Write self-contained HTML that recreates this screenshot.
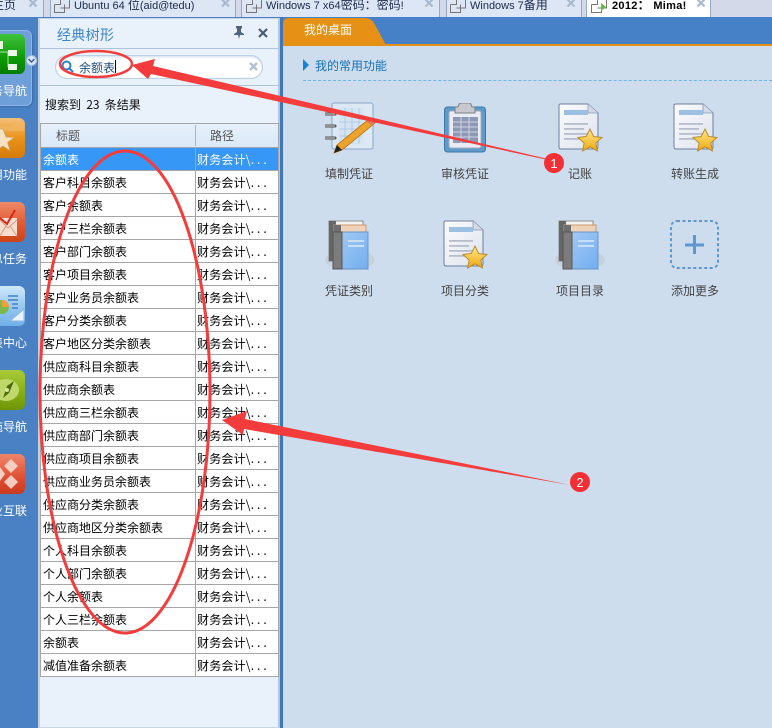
<!DOCTYPE html>
<html lang="zh"><head><meta charset="utf-8">
<style>
html,body{margin:0;padding:0;width:772px;height:728px;overflow:hidden;background:#4a80c4}
body{position:relative;font:12px/16px "WenQuanYi Zen Hei","Noto Sans CJK SC","Liberation Sans",sans-serif;color:#000}
div,span,svg{position:absolute;box-sizing:border-box}
.tab{top:-2px;height:19px;background:#dce6f4;border-left:1px solid #9aa9c2;border-right:1px solid #9aa9c2;white-space:nowrap;overflow:hidden;color:#1c2b4a;line-height:16px;font-family:"Liberation Sans","WenQuanYi Zen Hei",sans-serif}
.tab b{position:absolute;left:23px;top:-1px;font-weight:normal;font-size:11px}
.tab b em{font-style:normal;font-size:12px}
.side{left:0;width:25px;height:40px;border-radius:0 6px 6px 0;overflow:hidden}
.sl{left:-20px;width:47px;text-align:right;color:#fff;white-space:nowrap;height:16px}
.r{left:41px;width:237px;height:23px;border-bottom:1px solid #a6a6a6;background:#fff;white-space:nowrap;line-height:21px}
.r i{position:absolute;font-style:normal;left:2px;top:1px}
.r u{position:absolute;text-decoration:none;left:156px;top:1px;letter-spacing:.2px}
.r u em{font-style:normal;letter-spacing:3px}
.r:after{content:"";position:absolute;left:154px;top:0;width:1px;height:23px;background:#a6a6a6}
.lab{width:90px;text-align:center;color:#444;height:16px}
</style></head><body>

<svg width="0" height="0" style="left:0;top:0">
<defs>
<linearGradient id="st" x1="0" y1="0" x2="0" y2="1"><stop offset="0" stop-color="#ffe88a"/><stop offset="1" stop-color="#f0a810"/></linearGradient>
<linearGradient id="bk" x1="0" y1="0" x2="1" y2="1"><stop offset="0" stop-color="#a8cdf4"/><stop offset="1" stop-color="#72aef0"/></linearGradient>
<linearGradient id="pap" x1="0" y1="0" x2="1" y2="1"><stop offset="0" stop-color="#fbfcfe"/><stop offset="1" stop-color="#dde2ec"/></linearGradient>
<symbol id="doc" viewBox="0 0 46 50">
<path d="M1 2.500Q1 1 2.500 1H30L40 10V44Q40 46 38 46H3Q1 46 1 44Z" fill="url(#pap)" stroke="#6f7e9e" stroke-width="1"/>
<path d="M30 1V10H40" fill="#d3d9e5" stroke="#8c99b3" stroke-width=".8"/>
<rect x="6" y="7" width="24" height="5" fill="#9cc0e2"/>
<rect x="6" y="20" width="24" height="1.800" fill="#b7bdcc"/><rect x="6" y="25" width="20" height="1.800" fill="#b7bdcc"/>
<rect x="6" y="30" width="24" height="1.800" fill="#b7bdcc"/><rect x="6" y="35" width="22" height="1.800" fill="#b7bdcc"/>
<path d="M32 26l3.600 7.500 8.400 1-6.200 5.500 1.700 8-7.500-4.200-7.400 4.200 1.500-8-6.200-5.500 8.400-1z" fill="url(#st)" stroke="#b5862a" stroke-width=".9"/>
</symbol>
<symbol id="books" viewBox="0 0 50 50">
<ellipse cx="25" cy="40" rx="25" ry="10" fill="#c6d1dc"/>
<rect x="4" y="1" width="34" height="40" fill="#f4f4f4" stroke="#8a8a8a"/><rect x="4" y="1" width="7" height="40" fill="#666"/>
<rect x="9" y="5" width="32" height="41" fill="#efd3b8" stroke="#c89a70"/><rect x="9" y="5" width="7" height="41" fill="#6e6e6e"/>
<rect x="8" y="12" width="35" height="37" fill="url(#bk)" stroke="#6c94c4"/><rect x="8" y="12" width="9" height="37" fill="#7c7c7c" stroke="#555"/>
<rect x="23" y="20" width="16" height="2" fill="#c9dff5"/><rect x="23" y="25" width="16" height="2" fill="#c9dff5"/>
</symbol>
</defs></svg>

<!-- tab bar -->
<div style="left:0;top:0;width:772px;height:17px;background:#d4d9ea"></div>
<div class="tab" style="left:-10px;width:54px"><b style="left:1px"><em>主页</em></b></div>
<div class="tab" style="left:50px;width:186px"><b>Ubuntu 64 <em>位</em>(aid@tedu)</b></div>
<div class="tab" style="left:241px;width:199px"><b style="left:24px">Windows 7 x64<em>密码：密码</em>!</b></div>
<div class="tab" style="left:446px;width:136px"><b>Windows 7<em>备用</em></b></div>
<div class="tab" style="left:586px;width:125px;background:#fff;border-color:#fff #9aa9c2"><b style="left:25px;font-weight:bold;color:#000;letter-spacing:.3px">2012<em>：</em>&nbsp;Mima!</b></div>
<svg style="left:0;top:0" width="772" height="17" fill="none" stroke="#777" stroke-width="1">
<path d="M54.500 4.500H60.500V0M54.500 4.500V12.500H64.500V8H69.500V0M60.500 8H64.500V4.500"/>
<path d="M246.500 4.500H252.500V0M246.500 4.500V12.500H256.500V8H261.500V0M252.500 8H256.500V4.500"/>
<path d="M450.500 4.500H456.500V0M450.500 4.500V12.500H460.500V8H465.500V0M456.500 8H460.500V4.500"/>
<path d="M591.500 4.500H597.500V0M591.500 4.500V12.500H601.500V8H606.500V0M597.500 8H601.500V4.500"/>
<path d="M601 3V11L606 7Z" fill="#5fc03c" stroke="none"/>
<g stroke="#a9bacf" stroke-width="2.200">
<path d="M29.500 -.5L36.500 6.500M36.500 -.5L29.500 6.500"/>
<path d="M222 -.5L229 6.500M229 -.5L222 6.500"/>
<path d="M425.500 -.5L432.500 6.500M432.500 -.5L425.500 6.500"/>
<path d="M567.500 -.5L574.500 6.500M574.500 -.5L567.500 6.500"/>
<path d="M697.500 -.5L704.500 6.500M704.500 -.5L697.500 6.500"/>
</g>
</svg>

<!-- left rail -->
<div style="left:-8px;top:30px;width:40px;height:76px;background:#6f9fd8;border:1px solid #8fb6e4;border-radius:6px;box-shadow:1px 1px 1px #3a6cab"></div>
<div class="side" style="top:34px;background:linear-gradient(#3fc23c,#0e9a07 60%,#067d03)"></div>
<svg style="left:0;top:38px" width="24" height="34"><path d="M0 14H8M8 14V29M8 14H10M8 29H10" stroke="#a8e69c" stroke-width="1" fill="none"/><rect x="0" y="3" width="3" height="8" fill="#e6f7e0"/><rect x="8" y="12" width="9" height="6" fill="#eaf8e4"/><rect x="8" y="26" width="9" height="6" fill="#eaf8e4"/></svg>
<div style="left:26px;top:55px;width:11px;height:11px;border-radius:50%;background:#d9e6f6;border:1px solid #9fbbdc"></div>
<svg style="left:28px;top:58px" width="7" height="5"><path d="M.5 1L3.500 4 6.500 1" fill="none" stroke="#3b5f90" stroke-width="1.500"/></svg>
<div class="sl" style="top:83px">务导航</div>

<div class="side" style="top:118px;background:linear-gradient(#f3c078,#e8931a 50%,#d67c08)"></div>
<svg style="left:0;top:118px" width="25" height="40"><path d="M0 8H12L17 4H24V13H0Z" fill="#f2b765" opacity=".7"/><path d="M3 11l3 8 8 .500-6.500 5 2.500 8-7-4.500-7 4.500V11z" fill="#f5e2c2" stroke="#d2a468" stroke-width=".7"/></svg>
<div class="sl" style="top:167px">用功能</div>

<div class="side" style="top:202px;background:linear-gradient(#ee8a6a,#e0552c 60%,#cc4318)"></div>
<svg style="left:0;top:202px" width="25" height="40"><path d="M0 16H17V34H0Z" fill="#f6ddd0"/><path d="M0 18L8 26 17 18M0 34L6 24M17 34L10 24" fill="none" stroke="#d99a80"/><path d="M0 16L7 22 15 8" fill="none" stroke="#d6281a" stroke-width="2"/></svg>
<div class="sl" style="top:251px">息任务</div>

<div class="side" style="top:286px;background:linear-gradient(#cfe8fb,#8ec3ee 60%,#6fb0e8)"></div>
<svg style="left:0;top:290px" width="24" height="34"><circle cx="2" cy="17" r="7" fill="#7cb84a"/><path d="M2 10a7 7 0 0 1 7 7H2z" fill="#eda23a"/><path d="M8 6H18M8 10H18M12 14H18M12 18H18" stroke="#3f80c8" stroke-width="1.500"/><path d="M10 31L24 19V31Z" fill="#e9f3fb" stroke="#8fb6d8"/></svg>
<div class="sl" style="top:335px">表中心</div>

<div class="side" style="top:370px;background:linear-gradient(#a8cc38,#84ab14 60%,#6f9608)"></div>
<svg style="left:0;top:376px" width="24" height="28"><ellipse cx="6" cy="14" rx="13" ry="11" fill="#bfd86a"/><path d="M14 5L9 17 3 22 7 10z" fill="#4c6a10"/><circle cx="7" cy="14" r="2" fill="#d8ea9a"/></svg>
<div class="sl" style="top:419px">拖导航</div>

<div class="side" style="top:454px;background:linear-gradient(#f0856a,#df4e34 60%,#c93a20)"></div>
<svg style="left:0;top:458px" width="24" height="34" fill="#f6cdbf"><path d="M11 1l7 7-7 7-7-7z"/><path d="M11 17l7 7-7 7-7-7z"/><path d="M0 9l5 7-5 7-6-7z"/></svg>
<div class="sl" style="top:503px">业互联</div>

<!-- tree panel -->
<div style="left:38px;top:18px;width:242px;height:710px;background:#e9f1fa;border:1px solid #c9d6e6;border-right:2px solid #b5c6dc;border-left:2px solid #c4cfdc"></div>
<div style="left:57px;top:26px;font-size:14px;line-height:18px;color:#3f86c9;letter-spacing:.3px">经典树形</div>
<svg style="left:233px;top:26px" width="12" height="13"><path d="M3 0H9V2L8 3V6L11 8V9H7L6 13 5 9H1V8L4 6V3L3 2Z" fill="#52647c"/></svg>
<svg style="left:258px;top:28px" width="10" height="10"><path d="M1 1L9 9M9 1L1 9" stroke="#4a5a70" stroke-width="2.200"/></svg>
<div style="left:40px;top:48px;width:238px;height:1px;background:#aec4dc"></div>
<div style="left:55px;top:55px;width:208px;height:24px;background:#fff;border:1px solid #bcd0e4;border-radius:12px;box-shadow:inset 0 1px 2px #d0dcea"></div>
<svg style="left:61px;top:60px" width="13" height="14"><circle cx="5.500" cy="5.500" r="4" fill="none" stroke="#2f7fc8" stroke-width="2"/><path d="M8.500 8.500L12 12" stroke="#2f7fc8" stroke-width="2"/></svg>
<div style="left:79px;top:60px;color:#1f4f7a;white-space:nowrap">余额表</div>
<div style="left:115px;top:60px;width:1px;height:13px;background:#000"></div>
<svg style="left:249px;top:62px" width="10" height="10"><path d="M1 1L8 8M8 1L1 8" stroke="#b3c2d2" stroke-width="2.400"/></svg>
<div style="left:40px;top:85px;width:238px;height:1px;background:#aec4dc"></div>
<div style="left:45px;top:97px;white-space:pre;color:#111;word-spacing:2.500px">搜索到 23 条结果</div>

<!-- table -->
<div style="left:40px;top:123px;width:239px;height:554px;border:1px solid #a6a6a6;background:#fff"></div>
<div style="left:41px;top:124px;width:237px;height:24px;background:linear-gradient(#e6f0fb,#dbe8f8);border-bottom:1px solid #a6a6a6"></div>
<div style="left:195px;top:125px;width:1px;height:21px;background:#a6b4c6"></div>
<div style="left:56px;top:128px;color:#555">标题</div>
<div style="left:210px;top:128px;color:#555">路径</div>
<div class="r" style="top:148px;background:#3797f7;color:#fff"><i>余额表</i><u>财务会计\<em>...</em></u></div>
<div class="r" style="top:171px"><i>客户科目余额表</i><u>财务会计\<em>...</em></u></div>
<div class="r" style="top:194px"><i>客户余额表</i><u>财务会计\<em>...</em></u></div>
<div class="r" style="top:217px"><i>客户三栏余额表</i><u>财务会计\<em>...</em></u></div>
<div class="r" style="top:240px"><i>客户部门余额表</i><u>财务会计\<em>...</em></u></div>
<div class="r" style="top:263px"><i>客户项目余额表</i><u>财务会计\<em>...</em></u></div>
<div class="r" style="top:286px"><i>客户业务员余额表</i><u>财务会计\<em>...</em></u></div>
<div class="r" style="top:309px"><i>客户分类余额表</i><u>财务会计\<em>...</em></u></div>
<div class="r" style="top:332px"><i>客户地区分类余额表</i><u>财务会计\<em>...</em></u></div>
<div class="r" style="top:355px"><i>供应商科目余额表</i><u>财务会计\<em>...</em></u></div>
<div class="r" style="top:378px"><i>供应商余额表</i><u>财务会计\<em>...</em></u></div>
<div class="r" style="top:401px"><i>供应商三栏余额表</i><u>财务会计\<em>...</em></u></div>
<div class="r" style="top:424px"><i>供应商部门余额表</i><u>财务会计\<em>...</em></u></div>
<div class="r" style="top:447px"><i>供应商项目余额表</i><u>财务会计\<em>...</em></u></div>
<div class="r" style="top:470px"><i>供应商业务员余额表</i><u>财务会计\<em>...</em></u></div>
<div class="r" style="top:493px"><i>供应商分类余额表</i><u>财务会计\<em>...</em></u></div>
<div class="r" style="top:516px"><i>供应商地区分类余额表</i><u>财务会计\<em>...</em></u></div>
<div class="r" style="top:539px"><i>个人科目余额表</i><u>财务会计\<em>...</em></u></div>
<div class="r" style="top:562px"><i>个人部门余额表</i><u>财务会计\<em>...</em></u></div>
<div class="r" style="top:585px"><i>个人余额表</i><u>财务会计\<em>...</em></u></div>
<div class="r" style="top:608px"><i>个人三栏余额表</i><u>财务会计\<em>...</em></u></div>
<div class="r" style="top:631px"><i>余额表</i><u>财务会计\<em>...</em></u></div>
<div class="r" style="top:654px"><i>减值准备余额表</i><u>财务会计\<em>...</em></u></div>

<!-- main -->
<div style="left:280px;top:17px;width:3px;height:711px;background:#3f76bc"></div>
<div style="left:283px;top:17px;width:489px;height:28px;background:#4680c6"></div>
<div style="left:283px;top:44px;width:489px;height:2px;background:#e69115"></div>
<svg style="left:283px;top:18px" width="104" height="27"><path d="M0 27V6Q0 0 6 0H82Q88 0 91 5L103 27Z" fill="#e69115"/></svg>
<div style="left:304px;top:22px;color:#fff">我的桌面</div>
<div style="left:283px;top:46px;width:489px;height:682px;background:#cedded"></div>
<svg style="left:303px;top:59px" width="7" height="12"><path d="M0 0L6 6 0 12Z" fill="#1683d8"/></svg>
<div style="left:315px;top:58px;color:#1671b8;white-space:nowrap">我的常用功能</div>
<div style="left:303px;top:80px;width:469px;border-top:1px dashed #6cb6ea"></div>

<!-- icons -->
<svg style="left:325px;top:102px" width="52" height="52">
<rect x="7" y="1" width="41" height="46" rx="2" fill="#dce8f4" stroke="#8aa6c8"/>
<path d="M14 6H38V42H14Z" fill="#d5e4f3"/>
<path d="M14 13H36M14 20H36M14 27H36M14 34H36M20 6V42M27 6V42M34 6V42" stroke="#a7c4e0" stroke-width=".8"/>
<path d="M0 12H10M0 24H10M0 36H10" stroke="#555" stroke-width="3" stroke-linecap="round"/>
<path d="M0 12H10M0 24H10M0 36H10" stroke="#ccc" stroke-width="1"/>
<path d="M44 17L50 21 17 48 9 51 12 43Z" fill="#eda22c" stroke="#b86f10" stroke-width=".8"/>
<path d="M44 17L50 21 47 23.500 41 19.500Z" fill="#e27b5b"/>
<path d="M9 51L12 43 17 48Z" fill="#222"/>
</svg>
<svg style="left:444px;top:103px" width="42" height="50">
<rect x="0.500" y="4" width="41" height="45" rx="3" fill="#5e9bcb" stroke="#3b78ab"/>
<rect x="5" y="8" width="32" height="37" rx="2" fill="#e9ecf2" stroke="#aab"/>
<path d="M11 4H14Q15 0 17 0H25Q27 0 28 4H31V10H11Z" fill="#c7c9ce" stroke="#7b7f88"/>
<rect x="9" y="14" width="25" height="26" fill="#8e97b4"/>
<path d="M9 19H34M9 24H34M9 29H34M9 34H34M17 14V40M25 14V40" stroke="#cfd4e2" stroke-width="1"/>
</svg>
<svg style="left:558px;top:103px" width="46" height="50"><use href="#doc"/></svg>
<svg style="left:673px;top:103px" width="46" height="50"><use href="#doc"/></svg>
<svg style="left:325px;top:220px" width="50" height="50"><use href="#books"/></svg>
<svg style="left:443px;top:220px" width="46" height="50"><use href="#doc"/></svg>
<svg style="left:555px;top:220px" width="50" height="50"><use href="#books"/></svg>
<svg style="left:670px;top:220px" width="50" height="50">
<rect x="1" y="1" width="47" height="47" rx="6" fill="none" stroke="#5b98d2" stroke-width="2" stroke-dasharray="3 2.500"/>
<path d="M15 25H34M24.500 15V34" stroke="#5b98d2" stroke-width="3"/>
</svg>

<div class="lab" style="left:304px;top:166px">填制凭证</div>
<div class="lab" style="left:420px;top:166px">审核凭证</div>
<div class="lab" style="left:535px;top:166px">记账</div>
<div class="lab" style="left:650px;top:166px">转账生成</div>
<div class="lab" style="left:304px;top:283px">凭证类别</div>
<div class="lab" style="left:420px;top:283px">项目分类</div>
<div class="lab" style="left:535px;top:283px">项目目录</div>
<div class="lab" style="left:650px;top:283px">添加更多</div>

<!-- annotations -->
<svg style="left:0;top:0" width="772" height="728">
<ellipse cx="96" cy="64" rx="36" ry="13" fill="none" stroke="#f43c3c" stroke-width="2.500"/>
<ellipse cx="125" cy="392" rx="85" ry="241" fill="none" stroke="#f43c3c" stroke-width="3"/>
<path d="M132 65L155 59 153 66 548 159 548 160 151 74 148 79Z" fill="#f43c3c"/>
<path d="M222 420L247 411 245 419 570 485 244 429 243 435Z" fill="#f43c3c"/>
<circle cx="554" cy="163" r="10" fill="#f32f35"/>
<circle cx="580" cy="482" r="10" fill="#f32f35"/>
<text x="554" y="168" font-family="Liberation Sans" font-size="13" fill="#fff" text-anchor="middle">1</text>
<text x="580" y="487" font-family="Liberation Sans" font-size="13" fill="#fff" text-anchor="middle">2</text>
</svg>
</body></html>
